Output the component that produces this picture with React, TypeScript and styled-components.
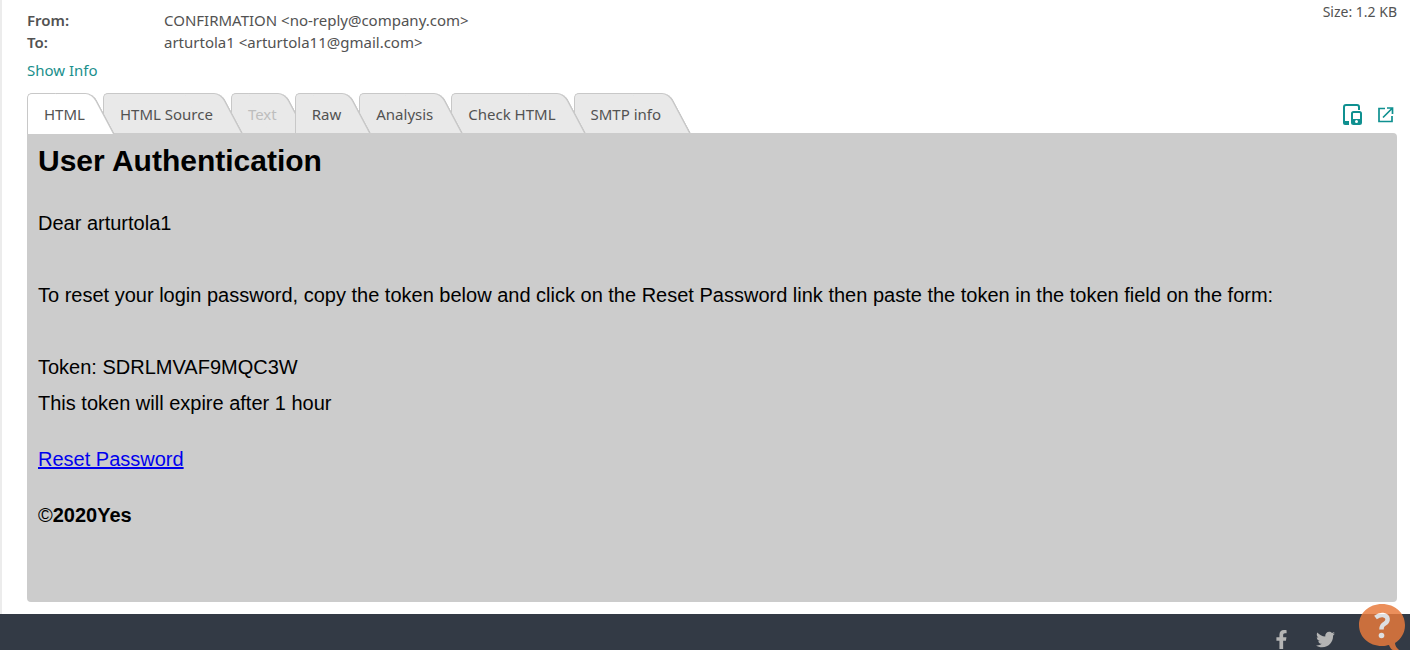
import React, { useState } from "react";
import styled, { createGlobalStyle } from "styled-components";
import { FaFacebookF, FaTwitter } from "react-icons/fa";

const GlobalStyle = createGlobalStyle`
  * { box-sizing: border-box; }
  body {
    margin: 0;
    background: #fff;
    color: #525252;
    font: 15px/22px "Noto Sans", "Open Sans", sans-serif;
  }
`;

const Page = styled.div`
  display: flex;
  flex-direction: column;
  min-height: 100vh;
  overflow: hidden;
`;

const Message = styled.main`
  flex: 1;
  border-left: 2px solid #ececec;
  padding: 0 13px 12px 25px;
`;

const Header = styled.header`
  display: flex;
  justify-content: space-between;
  align-items: flex-start;
`;

const Fields = styled.dl`
  display: grid;
  grid-template-columns: 137px auto;
  margin: 0;
  padding-top: 9px;
`;

const FieldName = styled.dt`
  font-weight: 600;
`;

const FieldValue = styled.dd`
  margin: 0;
`;

const Size = styled.span`
  font-size: 14px;
  line-height: 24px;
`;

const InfoLink = styled.a`
  display: inline-block;
  margin: 6px 0 12px;
  color: #1a8f8c;
  text-decoration: none;
`;

const Toolbar = styled.div`
  display: flex;
  justify-content: space-between;
  height: 40px;
`;

const TabList = styled.div`
  display: flex;
  isolation: isolate;
`;

const Tab = styled.button<{ $active: boolean; $level: number }>`
  --fill: ${(p) => (p.$active ? "#fff" : "#e9e9e9")};
  position: relative;
  z-index: ${(p) => p.$level};
  height: 40px;
  padding: 2px 18px 0 17px;
  border: 0;
  background: none;
  color: inherit;
  font: inherit;
  white-space: nowrap;
  cursor: pointer;

  &:disabled {
    color: #bdbdbd;
    cursor: default;
  }

  &::before,
  &::after {
    content: "";
    position: absolute;
    z-index: -1;
    top: 0;
    bottom: ${(p) => (p.$active ? -1 : 0)}px;
    background: var(--fill);
    border: 1px solid #c8c8c8;
    border-bottom: 0;
  }

  &::before {
    left: 0;
    right: 20px;
    border-right: 0;
    border-radius: 5px 0 0 0;
  }

  &::after {
    right: -12px;
    width: 36px;
    border-left: 0;
    border-right-width: 2px;
    border-radius: 0 8px 0 0;
    transform: skewX(28deg);
    transform-origin: bottom;
  }
`;

const Actions = styled.div`
  display: flex;
  align-items: center;
  gap: 12px;
  padding-top: 3px;
`;

const IconButton = styled.button`
  display: flex;
  padding: 0;
  border: 0;
  background: none;
  color: #0f9090;
  cursor: pointer;
`;

const Mail = styled.article`
  min-height: 469px;
  padding: 0 11px;
  border-radius: 0 4px 4px 4px;
  background: #ccc;
  color: #000;
  font: 20px/36px "Liberation Sans", Arial, sans-serif;
`;

const Title = styled.h1`
  margin: 0 0 16px;
  font-size: 30px;
  line-height: 56px;
`;

const Paragraph = styled.p<{ $gap?: number }>`
  margin: 0 0 ${(p) => p.$gap ?? 20}px;
`;

const MailLink = styled.a`
  color: #0000ee;
`;

const Footer = styled.footer`
  display: flex;
  justify-content: flex-end;
  gap: 25px;
  height: 36px;
  padding: 16px 75px 0;
  background: #333a45;
`;

const SocialLink = styled.a`
  display: flex;
  color: #b4b4b4;
`;

const HelpButton = styled.button`
  position: fixed;
  right: 4px;
  bottom: 0;
  display: flex;
  padding: 0;
  border: 0;
  background: none;
  opacity: 0.84;
  cursor: pointer;
`;

const tabs = ["HTML", "HTML Source", "Text", "Raw", "Analysis", "Check HTML", "SMTP info"];

const DevicesIcon = () => (
  <svg width="20" height="22" viewBox="0 0 20 22" fill="none" stroke="currentColor" strokeWidth="2">
    <path d="M16 6V3q0-2-2-2H3Q1 1 1 3v15" />
    <path d="M0 17h6v4H2q-2 0-2-2z" fill="currentColor" stroke="none" />
    <rect x="9" y="8" width="9" height="12" rx="1.5" />
    <path d="M9 15h9v5H9z" fill="currentColor" stroke="none" />
    <circle cx="13.500" cy="17.500" r="1.500" fill="#fff" stroke="none" />
  </svg>
);

const OpenIcon = () => (
  <svg width="22" height="16" viewBox="0 0 22 16" fill="none" stroke="currentColor" strokeWidth="1.7">
    <path d="M10 1.500H4v13h13V9M12 1h5.500v6M17.500 1 8 10.500" />
  </svg>
);

const HelpIcon = () => (
  <svg width="48" height="47" viewBox="0 0 48 47">
    <path d="M24 1C11 1 1 10 1 22s10 21 23 21c3 0 5-.5 7-1 1 3 3 5 4 5h6c-2-2-4-4-4-7 6-4 10-10 10-18C47 10 37 1 24 1z" fill="#e87a3c" />
    <path d="M17.500 14.500q4-3 7.500-2.500c6 1 5.500 6 2 8.500-2.500 1.800-3.500 2.500-3.500 6" fill="none" stroke="#fff" strokeWidth="4.500" />
    <circle cx="23.500" cy="32.500" r="2.800" fill="#fff" />
  </svg>
);

export default function App() {
  const [active, setActive] = useState("HTML");

  return (
    <Page>
      <GlobalStyle />
      <Message>
        <Header>
          <Fields>
            <FieldName>From:</FieldName>
            <FieldValue>CONFIRMATION &lt;no-reply@company.com&gt;</FieldValue>
            <FieldName>To:</FieldName>
            <FieldValue>arturtola1 &lt;arturtola11@gmail.com&gt;</FieldValue>
          </Fields>
          <Size>Size: 1.2 KB</Size>
        </Header>
        <InfoLink href="#info">Show Info</InfoLink>
        <Toolbar>
          <TabList role="tablist">
            {tabs.map((name, i) => (
              <Tab
                key={name}
                role="tab"
                aria-selected={name === active}
                disabled={name === "Text"}
                $active={name === active}
                $level={name === active ? 20 : name === "Text" ? 1 : 10 - i}
                onClick={() => setActive(name)}
              >
                {name}
              </Tab>
            ))}
          </TabList>
          <Actions>
            <IconButton aria-label="Preview on devices"><DevicesIcon /></IconButton>
            <IconButton aria-label="Open in new window"><OpenIcon /></IconButton>
          </Actions>
        </Toolbar>
        <Mail>
          <Title>User Authentication</Title>
          <Paragraph $gap={36}>Dear arturtola1</Paragraph>
          <Paragraph $gap={36}>
            To reset your login password, copy the token below and click on the Reset Password link then paste the token in the token field on the form:
          </Paragraph>
          <Paragraph>
            Token: SDRLMVAF9MQC3W
            <br />
            This token will expire after 1 hour
          </Paragraph>
          <Paragraph><MailLink href="#reset">Reset Password</MailLink></Paragraph>
          <Paragraph>©<strong>2020Yes</strong></Paragraph>
        </Mail>
      </Message>
      <Footer>
        <SocialLink href="#facebook" aria-label="Facebook"><FaFacebookF size={19} /></SocialLink>
        <SocialLink href="#twitter" aria-label="Twitter"><FaTwitter size={19} /></SocialLink>
      </Footer>
      <HelpButton aria-label="Help"><HelpIcon /></HelpButton>
    </Page>
  );
}
